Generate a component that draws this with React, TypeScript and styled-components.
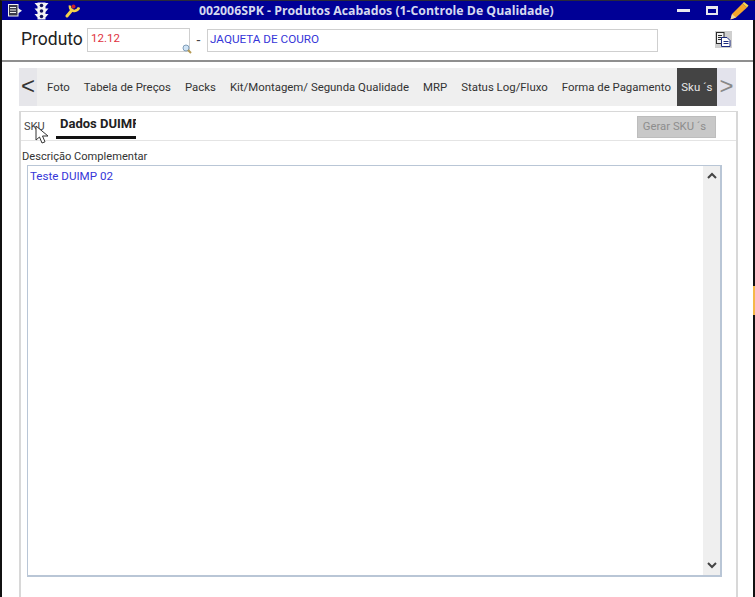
import styled, { createGlobalStyle } from 'styled-components'

const tabs = ['Foto', 'Tabela de Preços', 'Packs', 'Kit/Montagem/ Segunda Qualidade', 'MRP', 'Status Log/Fluxo', 'Forma de Pagamento']

export default function App (): JSX.Element {
  return (
    <>
      <GlobalStyle />
      <WindowFrame>
        <TitleBar>
          <TitleIcons>
            <svg width="14" height="13" viewBox="0 0 14 13">
              <rect x="0.5" y="0.5" width="9.5" height="11.5" fill="#3a3a4a" stroke="#f0f0f0" />
              <path d="M2 3.5h6M2 6h6M2 8.5h6" stroke="#f0f0f0" />
              <path d="M10 4l4 2.8-4 2.8z" fill="#f0f0f0" />
            </svg>
            <svg width="15" height="18" viewBox="0 0 15 18">
              <path d="M3.5 0.5h8v17h-8zM3.5 1H0.5l3 3.5zM11.5 1h3l-3 3.5zM3.5 6.5h-3l3 3.5zM11.5 6.5h3l-3 3.5zM3.5 12h-3l3 3.5zM11.5 12h3l-3 3.5z" fill="#f4f4f4" />
              <circle cx="7.5" cy="3.5" r="1.8" fill="#14145a" />
              <circle cx="7.5" cy="9" r="1.8" fill="#14145a" />
              <circle cx="7.5" cy="14.5" r="1.8" fill="#14145a" />
            </svg>
            <svg width="15" height="15" viewBox="0 0 15 15">
              <path d="M2 13l5-6" stroke="#f4d24a" strokeWidth="3" strokeLinecap="round" />
              <path d="M5 2.5c-0.5 3 1.5 6 4.5 5.5s4-2 4.5-3.5" stroke="#f4d24a" strokeWidth="2.5" fill="none" />
              <circle cx="8.5" cy="3.5" r="2" fill="#c8232a" />
            </svg>
          </TitleIcons>
          <TitleText>002006SPK - Produtos Acabados (1-Controle De Qualidade)</TitleText>
          <WindowButtons>
            <MinimizeButton />
            <MaximizeButton />
            <svg width="19" height="18" viewBox="0 0 19 18">
              <path d="M0.5 17.5l1.5-5.5L12.5 1.5l4.5 4L6 15.5z" fill="#f5a62b" />
              <path d="M12.5 1.5L14 0l4.5 3.5-1.5 2z" fill="#f7d84a" />
              <path d="M0.5 17.5l1.5-5.5 4 3.5z" fill="#f2d9a0" />
            </svg>
          </WindowButtons>
        </TitleBar>

        <ProductRow>
          <ProductLabel>Produto</ProductLabel>
          <CodeField>
            12.12
            <LensIcon width="10" height="10" viewBox="0 0 10 10">
              <circle cx="4" cy="4" r="3" fill="#cfe3f5" stroke="#7f9db8" />
              <path d="M6 6l3 3" stroke="#b59a55" strokeWidth="2" />
            </LensIcon>
          </CodeField>
          <Dash>-</Dash>
          <NameField>JAQUETA DE COURO</NameField>
          <CopyButton>
            <svg width="17" height="17" viewBox="0 0 17 17">
              <rect x="1.5" y="1.5" width="7.5" height="11" fill="#f2f2f2" stroke="#2a2a2a" />
              <path d="M3 4.5h4M3 6.5h4M3 8.5h4" stroke="#2a2a2a" />
              <path d="M6.5 6.5h5.5l3 3v6h-8.5z" fill="#fff" stroke="#1c2a80" />
              <path d="M8.5 10.5h5M8.5 12.5h5" stroke="#1c2a80" />
            </svg>
          </CopyButton>
        </ProductRow>

        <TabBar>
          <ArrowCell $side="left">&lt;</ArrowCell>
          <TabList>
            {tabs.map(tab => <Tab key={tab}>{tab}</Tab>)}
            <ActiveTab>Sku ´s</ActiveTab>
          </TabList>
          <ArrowCell $side="right">&gt;</ArrowCell>
        </TabBar>

        <Panel>
          <SubHeader>
            <SubTab>SKU</SubTab>
            <ActiveSubTab>Dados DUIMP</ActiveSubTab>
            <GenerateButton>Gerar SKU ´s</GenerateButton>
            <Cursor width="14" height="20" viewBox="0 0 14 20">
              <path d="M1 1v14l3.5-3 2.5 6 3-1.2-2.5-5.8H13z" fill="#fff" stroke="#333" />
            </Cursor>
          </SubHeader>
          <FieldLabel>Descrição Complementar</FieldLabel>
          <MemoBox>
            <MemoText>Teste DUIMP 02</MemoText>
            <ScrollTrack>
              <svg width="12" height="8" viewBox="0 0 12 8"><path d="M2 6l4-4 4 4" fill="none" stroke="#444" strokeWidth="2" /></svg>
              <svg width="12" height="8" viewBox="0 0 12 8"><path d="M2 2l4 4 4-4" fill="none" stroke="#444" strokeWidth="2" /></svg>
            </ScrollTrack>
          </MemoBox>
        </Panel>
      </WindowFrame>
      <EdgeMark />
    </>
  )
}

const GlobalStyle = createGlobalStyle`
  html, body {
    margin: 0;
    height: 100%;
    overflow: hidden;
    background: #fff;
    font-family: Roboto, 'Liberation Sans', sans-serif;
  }
`

const WindowFrame = styled.div`
  display: flex;
  flex-direction: column;

  box-sizing: border-box;
  width: 755px;
  height: 597px;
  border-top: 1px solid #2a2a3a;
  border-left: 2px solid #111;
  border-right: 2px solid #111;

  background: #fff;
`

const TitleBar = styled.div`
  display: flex;
  align-items: center;
  flex-shrink: 0;

  box-sizing: border-box;
  height: 19px;
  margin-right: -2px;
  padding: 0 6px;

  background: #000096;
`

const TitleIcons = styled.div`
  display: flex;
  align-items: center;
  gap: 12px;

  width: 191px;

  & > svg:nth-child(3) {
    margin-left: 4px;
  }
`

const TitleText = styled.div`
  width: 360px;

  font: 700 12.3px 'Open Sans', sans-serif;
  color: #d5d9ef;
  white-space: nowrap;
`

const WindowButtons = styled.div`
  display: flex;
  align-items: center;

  margin-left: auto;
`

const MinimizeButton = styled.div`
  width: 13px;
  height: 3px;
  margin-right: 16px;

  background: #e8e8ee;
`

const MaximizeButton = styled.div`
  box-sizing: border-box;
  width: 12px;
  height: 9px;
  margin-right: 12px;
  border: 2px solid #e8e8ee;
  border-top-width: 3px;
`

const ProductRow = styled.div`
  display: flex;
  align-items: flex-start;
  flex-shrink: 0;

  box-sizing: border-box;
  height: 42px;
  padding: 8px 0 0 19px;
  border-bottom: 2px solid #8f8f8f;
`

const ProductLabel = styled.div`
  width: 66px;

  font: 400 17.5px/22px Roboto, sans-serif;
  color: #222;
`

const CodeField = styled.div`
  position: relative;

  box-sizing: border-box;
  width: 103px;
  height: 24px;
  padding: 2px 0 0 3px;
  border: 1px solid #cfcfcf;

  font: 400 11.5px/14px Roboto, sans-serif;
  color: #e0323c;
`

const LensIcon = styled.svg`
  position: absolute;
  right: -3px;
  bottom: -3px;
`

const Dash = styled.div`
  width: 17px;

  text-align: center;
  font: 400 14px/24px Roboto, sans-serif;
  color: #444;
`

const NameField = styled.div`
  box-sizing: border-box;
  width: 451px;
  height: 23px;
  margin-top: 1px;
  padding-left: 2px;
  border: 1px solid #cfcfcf;

  font: 400 11.7px/19px Roboto, sans-serif;
  color: #3636d8;
`

const CopyButton = styled.div`
  display: flex;
  align-items: center;
  justify-content: center;

  width: 17px;
  height: 17px;
  margin: 3px 0 0 57px;

  background: #cfcfcf;
`

const TabBar = styled.div`
  display: flex;
  align-items: stretch;
  flex-shrink: 0;

  width: 717px;
  height: 38px;
  margin: 6px 0 0 17px;

  background: #efefef;
`

const ArrowCell = styled.div<{ $side: 'left' | 'right' }>`
  display: flex;
  align-items: center;
  justify-content: center;
  flex-shrink: 0;

  width: ${({ $side }) => ($side === 'left' ? '18px' : '19px')};
  padding-bottom: 2px;

  background: ${({ $side }) => ($side === 'left' ? '#e6e6ea' : '#e3e3ec')};

  font: 400 24px 'Liberation Sans', sans-serif;
  color: ${({ $side }) => ($side === 'left' ? '#333' : '#888')};
`

const TabList = styled.div`
  display: flex;
  flex: 1;
  align-items: stretch;
  gap: 14px;

  min-width: 0;
  padding-left: 10px;
`

const Tab = styled.div`
  display: flex;
  align-items: center;
  flex-shrink: 0;

  font: 400 11.4px Roboto, sans-serif;
  color: #333;
  white-space: nowrap;
`

const ActiveTab = styled(Tab)`
  justify-content: center;

  width: 40px;
  margin-left: -8px;

  background: #444;
  color: #e8e8e8;
`

const Panel = styled.div`
  display: flex;
  flex-direction: column;
  flex: 1;

  box-sizing: border-box;
  width: 719px;
  margin: 5px 0 0 17px;
  border: 2px solid #d8d8d8;
  border-width: 1px 2px 0 2px;
`

const SubHeader = styled.div`
  position: relative;

  display: flex;
  align-items: flex-end;
  flex-shrink: 0;

  box-sizing: border-box;
  height: 29px;
  padding: 0 20px 0 3px;
  border-bottom: 1px solid #e4e4e4;
`

const SubTab = styled.div`
  width: 32px;
  height: 22px;

  font: 400 11px/17px Roboto, sans-serif;
  color: #444;
`

const ActiveSubTab = styled.div`
  overflow: hidden;

  box-sizing: border-box;
  width: 80px;
  height: 24px;
  margin-bottom: 1px;
  padding-left: 4px;
  border-bottom: 3px solid #111;

  font: 700 13px/17px Roboto, sans-serif;
  color: #222;
  white-space: nowrap;
`

const GenerateButton = styled.div`
  box-sizing: border-box;
  width: 79px;
  height: 22px;
  margin: 0 0 2px auto;
  padding-right: 4px;

  background: #c8c8c8;
  border: 1px solid #bdbdbd;

  text-align: center;
  font: 400 11.3px/20px Roboto, sans-serif;
  color: #8d8d8d;
`

const Cursor = styled.svg`
  position: absolute;
  left: 14px;
  top: 13px;
`

const FieldLabel = styled.div`
  height: 15px;
  margin: 8px 0 0 1px;

  font: 400 11.1px/15px Roboto, sans-serif;
  color: #333;
`

const MemoBox = styled.div`
  display: flex;
  justify-content: space-between;

  box-sizing: border-box;
  width: 695px;
  height: 412px;
  margin: 1px 0 0 6px;
  border: 1px solid #b9c6d6;
  border-width: 1px 2px 2px 1px;
`

const MemoText = styled.div`
  padding: 2px 0 0 2px;

  font: 400 11.6px/16px Roboto, sans-serif;
  color: #3636d8;
`

const ScrollTrack = styled.div`
  display: flex;
  flex-direction: column;
  justify-content: space-between;
  align-items: center;

  width: 17px;
  padding: 6px 0;

  background: #efefef;
`

const EdgeMark = styled.div`
  position: fixed;
  right: 0;
  top: 286px;

  width: 2px;
  height: 29px;

  background: #f5b848;
`
